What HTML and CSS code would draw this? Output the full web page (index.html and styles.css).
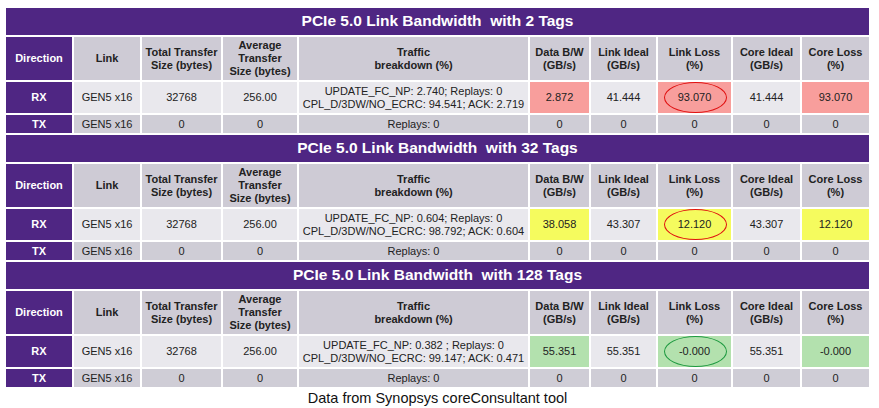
FILE: index.html
```html
<!DOCTYPE html>
<html>
<head>
<meta charset="utf-8">
<link rel="stylesheet" href="styles.css">
</head>
<body>
<div class="page">
  <div class="sec">
    <div class="title">PCIe 5.0 Link Bandwidth&nbsp; with 2 Tags</div>
    <div class="c dir hd">Direction</div>
    <div class="c hd">Link</div>
    <div class="c hd">Total Transfer<br>Size (bytes)</div>
    <div class="c hd">Average<br>Transfer<br>Size (bytes)</div>
    <div class="c hd">Traffic<br>breakdown (%)</div>
    <div class="c hd">Data B/W<br>(GB/s)</div>
    <div class="c hd">Link Ideal<br>(GB/s)</div>
    <div class="c hd">Link Loss<br>(%)</div>
    <div class="c hd">Core Ideal<br>(GB/s)</div>
    <div class="c hd">Core Loss<br>(%)</div>

    <div class="c dir">RX</div>
    <div class="c rx">GEN5 x16</div>
    <div class="c rx">32768</div>
    <div class="c rx">256.00</div>
    <div class="c rx">UPDATE_FC_NP: 2.740; Replays: 0<br>CPL_D/3DW/NO_ECRC: 94.541; ACK: 2.719</div>
    <div class="c red">2.872</div>
    <div class="c rx">41.444</div>
    <div class="c red ring"><span class="oval oval-red"></span>93.070</div>
    <div class="c rx">41.444</div>
    <div class="c red">93.070</div>

    <div class="c dir">TX</div>
    <div class="c tx">GEN5 x16</div>
    <div class="c tx">0</div>
    <div class="c tx">0</div>
    <div class="c tx">Replays: 0</div>
    <div class="c tx">0</div>
    <div class="c tx">0</div>
    <div class="c tx">0</div>
    <div class="c tx">0</div>
    <div class="c tx">0</div>
  </div>

  <div class="sec">
    <div class="title">PCIe 5.0 Link Bandwidth&nbsp; with 32 Tags</div>
    <div class="c dir hd">Direction</div>
    <div class="c hd">Link</div>
    <div class="c hd">Total Transfer<br>Size (bytes)</div>
    <div class="c hd">Average<br>Transfer<br>Size (bytes)</div>
    <div class="c hd">Traffic<br>breakdown (%)</div>
    <div class="c hd">Data B/W<br>(GB/s)</div>
    <div class="c hd">Link Ideal<br>(GB/s)</div>
    <div class="c hd">Link Loss<br>(%)</div>
    <div class="c hd">Core Ideal<br>(GB/s)</div>
    <div class="c hd">Core Loss<br>(%)</div>

    <div class="c dir">RX</div>
    <div class="c rx">GEN5 x16</div>
    <div class="c rx">32768</div>
    <div class="c rx">256.00</div>
    <div class="c rx">UPDATE_FC_NP: 0.604; Replays: 0<br>CPL_D/3DW/NO_ECRC: 98.792; ACK: 0.604</div>
    <div class="c yel">38.058</div>
    <div class="c rx">43.307</div>
    <div class="c yel ring"><span class="oval oval-red"></span>12.120</div>
    <div class="c rx">43.307</div>
    <div class="c yel">12.120</div>

    <div class="c dir">TX</div>
    <div class="c tx">GEN5 x16</div>
    <div class="c tx">0</div>
    <div class="c tx">0</div>
    <div class="c tx">Replays: 0</div>
    <div class="c tx">0</div>
    <div class="c tx">0</div>
    <div class="c tx">0</div>
    <div class="c tx">0</div>
    <div class="c tx">0</div>
  </div>

  <div class="sec">
    <div class="title">PCIe 5.0 Link Bandwidth&nbsp; with 128 Tags</div>
    <div class="c dir hd">Direction</div>
    <div class="c hd">Link</div>
    <div class="c hd">Total Transfer<br>Size (bytes)</div>
    <div class="c hd">Average<br>Transfer<br>Size (bytes)</div>
    <div class="c hd">Traffic<br>breakdown (%)</div>
    <div class="c hd">Data B/W<br>(GB/s)</div>
    <div class="c hd">Link Ideal<br>(GB/s)</div>
    <div class="c hd">Link Loss<br>(%)</div>
    <div class="c hd">Core Ideal<br>(GB/s)</div>
    <div class="c hd">Core Loss<br>(%)</div>

    <div class="c dir">RX</div>
    <div class="c rx">GEN5 x16</div>
    <div class="c rx">32768</div>
    <div class="c rx">256.00</div>
    <div class="c rx">UPDATE_FC_NP: 0.382 ; Replays: 0<br>CPL_D/3DW/NO_ECRC: 99.147; ACK: 0.471</div>
    <div class="c grn">55.351</div>
    <div class="c rx">55.351</div>
    <div class="c grn ring"><span class="oval oval-green"></span>-0.000</div>
    <div class="c rx">55.351</div>
    <div class="c grn">-0.000</div>

    <div class="c dir">TX</div>
    <div class="c tx">GEN5 x16</div>
    <div class="c tx">0</div>
    <div class="c tx">0</div>
    <div class="c tx">Replays: 0</div>
    <div class="c tx">0</div>
    <div class="c tx">0</div>
    <div class="c tx">0</div>
    <div class="c tx">0</div>
    <div class="c tx">0</div>
  </div>

  <div class="caption">Data from Synopsys coreConsultant tool</div>
</div>
</body>
</html>
```

FILE: styles.css
```css
html, body {
  margin: 0;
  padding: 0;
  background: #ffffff;
}

.page {
  width: 863px;
  padding: 8px 0 0 6px;
  font-family: "Liberation Sans", Arial, sans-serif;
  color: #222222;
  display: flex;
  flex-direction: column;
  gap: 2px;
}

.sec {
  display: grid;
  grid-template-columns: 66px 66px 79px 74px 229px 59px 65px 73px 67px 67px;
  grid-template-rows: 27px 43px 31px 18px;
  gap: 2px;
}

.title {
  grid-column: 1 / -1;
  background: #4f2683;
  color: #ffffff;
  font-weight: bold;
  font-size: 15.5px;
  display: flex;
  align-items: center;
  justify-content: center;
  padding-bottom: 1px;
}

.c {
  display: flex;
  align-items: center;
  justify-content: center;
  text-align: center;
  font-size: 11px;
  line-height: 13px;
  white-space: nowrap;
}

.hd {
  background: #cecbd5;
  font-weight: bold;
}

.dir {
  background: #4f2683;
  color: #ffffff;
  font-weight: bold;
}

.rx {
  background: #e9e8ed;
}

.tx {
  background: #cfcdd6;
}

.red {
  background: #f89e9c;
}

.yel {
  background: #f5fb5e;
}

.grn {
  background: #b3e1ae;
}

.ring {
  position: relative;
}

.oval {
  position: absolute;
  left: 6px;
  right: 4px;
  top: 0;
  bottom: 0;
  border-radius: 50%;
  border: 1px solid #e01010;
}

.oval-green {
  border-color: #1e9a40;
}

.caption {
  margin-top: 1px;
  text-align: center;
  font-size: 14.5px;
  line-height: 16px;
  color: #111111;
}
```
